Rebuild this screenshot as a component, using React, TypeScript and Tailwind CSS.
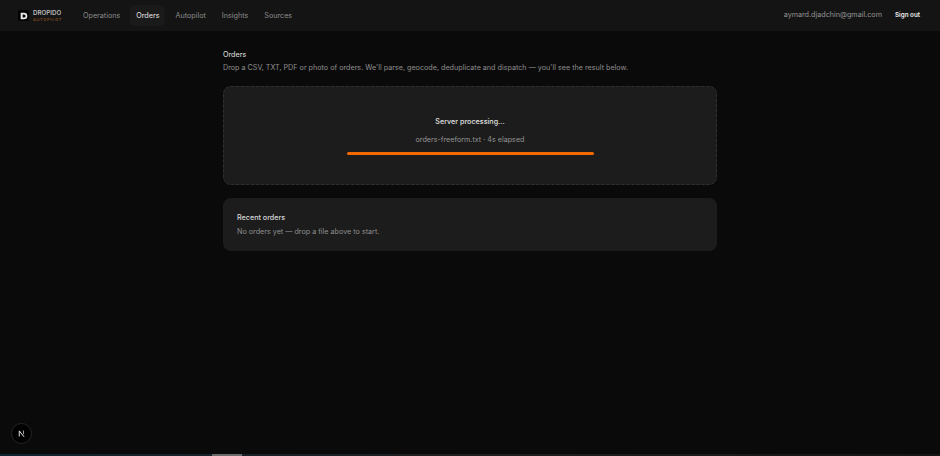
const navItems = ['Operations', 'Orders', 'Autopilot', 'Insights', 'Sources']

const Logo = () => (
  <div className="flex items-center gap-[4px]">
    <div className="flex h-[11px] w-[11px] items-center justify-center rounded-[2px] bg-black">
      <svg viewBox="0 0 12 12" className="h-[8px] w-[8px]">
        <path fillRule="evenodd" fill="#e8e8e8" d="M1 1h5a5 5 0 0 1 0 10H1zM4 3.6v4.8h2a2.4 2.4 0 0 0 0-4.8z" />
      </svg>
    </div>
    <div className="flex w-[29px] flex-col">
      <span className="text-[6.2px] leading-[8px] font-semibold text-[#bdbdbd]">DROPIDO</span>
      <span className="text-[4px] leading-[5px] font-medium tracking-[0.7px] text-[#8a4d1c]">AUTOPILOT</span>
    </div>
  </div>
)

export default function App() {
  return (
    <div className="relative flex h-[456px] w-[940px] flex-col overflow-hidden bg-[#0a0a0a] font-['Inter',sans-serif] text-[7.2px]">
      <header className="flex h-[31px] items-center justify-between bg-[#141414] pr-[20px] pl-[18px]">
        <div className="flex items-center">
          <Logo />
          <nav className="ml-[15px] flex items-center gap-[4px]">
            {navItems.map(item => (
              <span
                key={item}
                className={
                  item === 'Orders'
                    ? 'rounded-[5px] bg-[#1a1a1a] px-[6px] py-[5px] leading-[11px] text-[#e5e5e5]'
                    : 'rounded-[5px] px-[6px] py-[5px] leading-[11px] text-[#8c8c8c]'
                }
              >
                {item}
              </span>
            ))}
          </nav>
        </div>
        <div className="flex items-center gap-[13px]">
          <span className="text-[#949494]">aymard.djadchin@gmail.com</span>
          <span className="text-[6.3px] font-semibold text-[#ededed]">Sign out</span>
        </div>
      </header>

      <main className="mx-auto flex w-[494px] flex-col pt-[18px]">
        <h1 className="leading-[11px] text-[#e0e0e0]">Orders</h1>
        <p className="mt-[1px] leading-[14px] text-[#8e8e8e]">
          Drop a CSV, TXT, PDF or photo of orders. We'll parse, geocode, deduplicate and dispatch — you'll see the result below.
        </p>

        <section className="mt-[11px] flex h-[99px] flex-col items-center rounded-[8px] border border-dashed border-[#303030] bg-[#1c1c1c] pt-[29px]">
          <p className="leading-[11px] font-medium text-[#e0e0e0]">Server processing...</p>
          <p className="mt-[7px] leading-[11px] text-[#949494]">orders-freeform.txt · 4s elapsed</p>
          <div className="mt-[7px] h-[3px] w-[247px] rounded-full bg-[#f06a00]" />
        </section>

        <section className="mt-[13px] h-[53px] rounded-[8px] bg-[#1c1c1c] px-[14px] pt-[14px]">
          <h2 className="leading-[11px] font-medium text-[#d8d8d8]">Recent orders</h2>
          <p className="mt-[3px] leading-[12px] text-[#8e8e8e]">No orders yet — drop a file above to start.</p>
        </section>
      </main>

      <div className="absolute bottom-[12px] left-[11px] flex h-[21px] w-[21px] items-center justify-center rounded-full border border-[#262626] bg-black">
        <svg viewBox="0 0 12 12" className="h-[9px] w-[9px]">
          <path d="M3 10V2.5L9.5 10.5" fill="none" stroke="#e5e5e5" strokeWidth="1.3" />
          <path d="M8.6 2v5" fill="none" stroke="#b5b5b5" strokeWidth="1.2" />
        </svg>
      </div>

      <div className="absolute bottom-0 left-0 h-[2px] w-full bg-gradient-to-r from-[#0f2430] via-[#1f1f1f] to-[#151515]">
        <div className="ml-[212px] h-full w-[30px] bg-[#6a6a6a]" />
      </div>
    </div>
  )
}
